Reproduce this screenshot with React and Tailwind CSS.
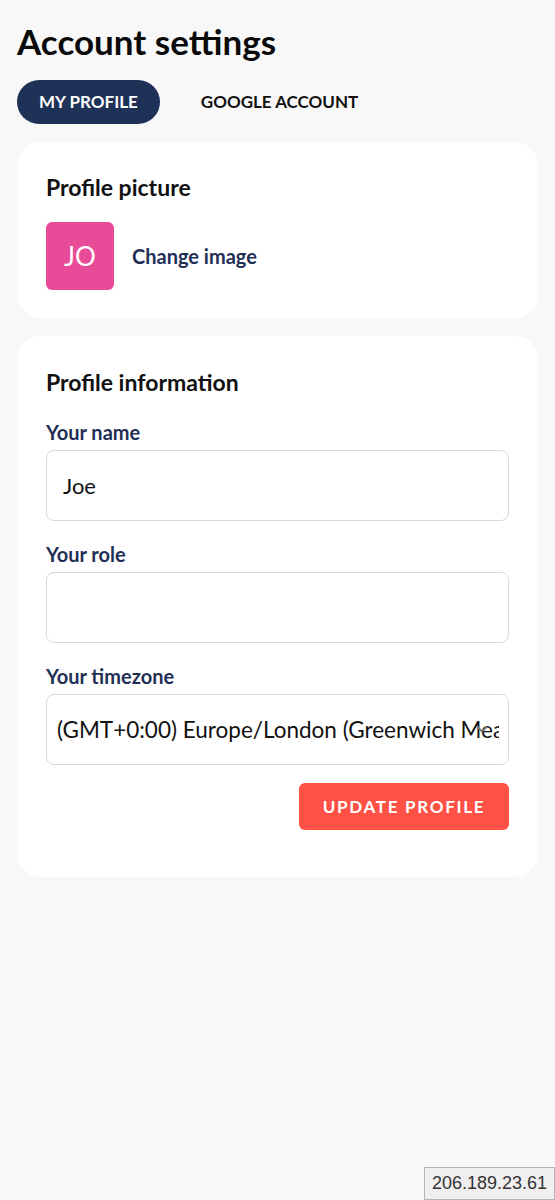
import React from 'react';

const Field = ({ label, children }) => (
  <div className="flex flex-col">
    <label className="text-[20px] font-bold text-[#1f2f55] leading-[24px] mb-[6px]">{label}</label>
    {children}
  </div>
);

const App = () => {
  return (
    <div className="min-h-[1200px] bg-[#f8f8f8] px-[17px] pt-[17px] font-['Lato',sans-serif] text-black">
      <h1 className="text-[35px] font-bold leading-[48px] text-[#0a0a0a]">Account settings</h1>

      <div className="flex items-center mt-[15px]">
        <button className="h-[44px] px-[22px] rounded-full bg-[#1e3157] text-white text-[17px] font-bold">
          MY PROFILE
        </button>
        <button className="h-[44px] px-[41px] text-[17px] font-bold text-[#111]">
          GOOGLE ACCOUNT
        </button>
      </div>

      <div className="mt-[18px] bg-white rounded-[24px] px-[29px] pt-[31px] pb-[28px]">
        <h2 className="text-[23px] font-bold leading-[28px] text-[#111]">Profile picture</h2>
        <div className="flex items-center gap-[18px] mt-[21px]">
          <div className="w-[68px] h-[68px] rounded-[6px] bg-[#e84c98] flex items-center justify-center text-white text-[26px]">
            JO
          </div>
          <span className="text-[20px] font-bold text-[#1f2f55]">Change image</span>
        </div>
      </div>

      <div className="mt-[18px] bg-white rounded-[24px] px-[29px] pt-[32px] pb-[47px]">
        <h2 className="text-[23px] font-bold leading-[28px] text-[#111]">Profile information</h2>

        <div className="flex flex-col gap-[21px] mt-[24px]">
          <Field label="Your name">
            <div className="h-[71px] rounded-[8px] border border-[#d8d8dc] px-[16px] flex items-center text-[22px] text-[#111]">
              Joe
            </div>
          </Field>
          <Field label="Your role">
            <div className="h-[71px] rounded-[8px] border border-[#d8d8dc]" />
          </Field>
          <Field label="Your timezone">
            <div className="relative h-[71px] rounded-[8px] border border-[#d8d8dc] pl-[10px] flex items-center overflow-hidden">
              <span className="whitespace-nowrap text-[22.5px] text-[#111]">(GMT+0:00) Europe/London (Greenwich Mean Time)</span>
              <div className="absolute right-0 top-0 bottom-0 w-[9px] bg-white" />
              <svg className="absolute right-[20px] top-[30px]" width="12" height="8" viewBox="0 0 12 8">
                <path d="M1 1.5 L6 6.5 L11 1.5" fill="none" stroke="#7a7a7a" strokeWidth="2" />
              </svg>
            </div>
          </Field>
        </div>

        <div className="flex justify-end mt-[18px]">
          <button className="h-[47px] w-[210px] rounded-[6px] bg-[#ff5145] text-white text-[17px] font-bold tracking-[1.7px]">
            UPDATE PROFILE
          </button>
        </div>
      </div>

      <div className="fixed right-0 bottom-0 h-[33px] px-[7px] bg-[#f0eeee] border border-[#b5b5b5] flex items-center text-[18px] text-[#333] font-['Liberation_Sans',sans-serif]">
        206.189.23.61
      </div>
    </div>
  );
};

export default App;
